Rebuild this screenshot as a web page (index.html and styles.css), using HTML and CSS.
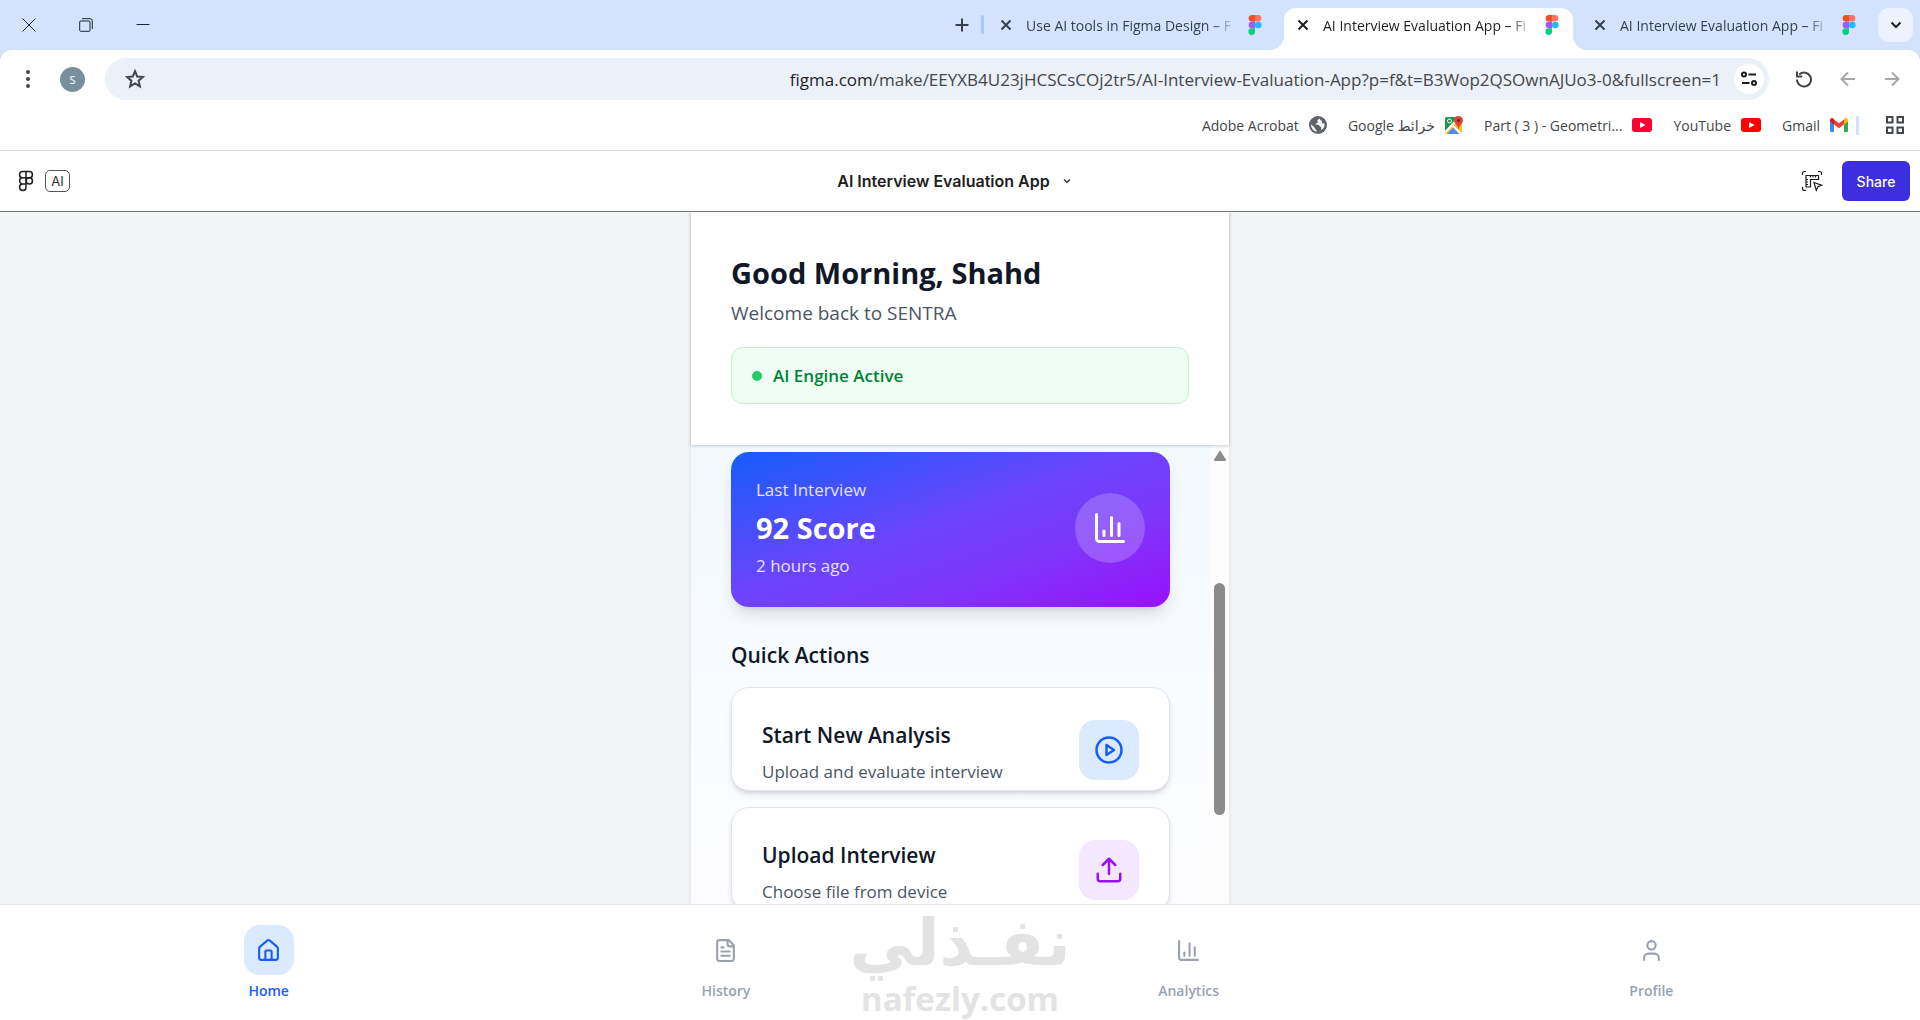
FILE: index.html
```html
<!DOCTYPE html>
<html lang="en">
<head>
    <meta charset="UTF-8">
    <meta name="viewport" content="width=device-width, initial-scale=1.0">
    <title>AI Interview Evaluation App</title>
    <link rel="stylesheet" href="styles.css">
</head>
<body>
    <!-- Shared icons -->
    <svg class="sprite" aria-hidden="true">
        <symbol id="figma" viewBox="0 0 14 20">
            <path fill="#f24e1e" d="M7 0H4a3.3 3.3 0 0 0 0 6.6h3z"/>
            <path fill="#ff7262" d="M7 0h3a3.3 3.3 0 0 1 0 6.6H7z"/>
            <path fill="#a259ff" d="M7 6.6H4a3.3 3.3 0 0 0 0 6.7h3z"/>
            <circle fill="#1abcfe" cx="10.3" cy="10" r="3.3"/>
            <path fill="#0acf83" d="M4 13.3h3v3.2a3.3 3.3 0 1 1-3-3.2z"/>
        </symbol>
        <symbol id="close" viewBox="0 0 12 12">
            <path d="M1.500 1.500l9 9M10.500 1.500l-9 9" fill="none" stroke="currentColor" stroke-width="2"/>
        </symbol>
        <symbol id="chart" viewBox="0 0 24 24">
            <path d="M3 3v16a2 2 0 0 0 2 2h16M18 17V9M13 17V5M8 17v-3"/>
        </symbol>
        <symbol id="youtube" viewBox="0 0 20 14">
            <rect width="20" height="14" rx="3" fill="currentColor"/>
            <path d="M8 4l5.500 3L8 10z" fill="#fff"/>
        </symbol>
    </svg>

    <div class="tab-strip">
        <div class="window-controls">
            <button aria-label="Close window"><svg width="14" height="14" viewBox="0 0 14 14"><path d="M.5.5l13 13M13.500.5l-13 13"/></svg></button>
            <button aria-label="Restore window"><svg width="14" height="14" viewBox="0 0 14 14"><rect x=".7" y="3" width="10.300" height="10.300" rx="1"/><path d="M3 .7h8a2.300 2.300 0 0 1 2.300 2.300v8"/></svg></button>
            <button aria-label="Minimize window"><svg width="14" height="14" viewBox="0 0 14 14"><path d="M.5 6.500h13"/></svg></button>
        </div>
        <button class="new-tab" aria-label="New tab"><svg width="14" height="14" viewBox="0 0 14 14"><path d="M7 .5v13M.5 7h13"/></svg></button>
        <div class="tab first">
            <svg class="x"><use href="#close"/></svg>
            <span class="tab-title">Use AI tools in Figma Design – F</span>
            <svg class="favicon"><use href="#figma"/></svg>
        </div>
        <div class="tab active">
            <svg class="x"><use href="#close"/></svg>
            <span class="tab-title">AI Interview Evaluation App – Fi</span>
            <svg class="favicon"><use href="#figma"/></svg>
        </div>
        <div class="tab">
            <svg class="x"><use href="#close"/></svg>
            <span class="tab-title">AI Interview Evaluation App – Fi</span>
            <svg class="favicon"><use href="#figma"/></svg>
        </div>
        <button class="tab-search" aria-label="Search tabs"><svg width="12" height="8" viewBox="0 0 12 8"><path d="M1.500 1.500L6 6l4.500-4.500"/></svg></button>
    </div>

    <div class="browser-bar">
        <div class="toolbar">
            <button class="menu" aria-label="Menu"><svg width="4" height="18" viewBox="0 0 4 18"><circle cx="2" cy="2" r="2"/><circle cx="2" cy="9" r="2"/><circle cx="2" cy="16" r="2"/></svg></button>
            <button class="avatar">S</button>
            <div class="omnibox">
                <svg class="star" width="20" height="20" viewBox="0 0 20 20"><path d="M10 2.200l2.200 5.300 5.700.5-4.300 3.700 1.300 5.600-4.900-3-4.900 3 1.300-5.600L2.100 8l5.700-.5z"/></svg>
                <div class="url"><b>figma.com</b>/make/EEYXB4U23jHCSCsCOj2tr5/AI-Interview-Evaluation-App?p=f&amp;t=B3Wop2QSOwnAJUo3-0&amp;fullscreen=1</div>
                <button class="site-info" aria-label="Site information"><svg width="16" height="16" viewBox="0 0 16 16"><circle cx="3" cy="3.500" r="2"/><path d="M7.500 3.500H15M1 12h7.500"/><circle cx="13" cy="12" r="2"/></svg></button>
            </div>
            <button class="nav-btn" aria-label="Reload"><svg width="18" height="18" viewBox="0 0 18 18"><path d="M4.200 4.500A7 7 0 1 1 2 9.500M2 1.500V6.500h5.200"/></svg></button>
            <button class="nav-btn off" aria-label="Back"><svg width="16" height="16" viewBox="0 0 16 16"><path d="M15 8H2M8 1.500L1.500 8 8 14.500"/></svg></button>
            <button class="nav-btn off" aria-label="Forward"><svg width="16" height="16" viewBox="0 0 16 16"><path d="M1 8h13M8 1.500L14.500 8 8 14.500"/></svg></button>
        </div>
        <div class="bookmarks">
            <a href="#">Adobe Acrobat <svg width="18" height="18" viewBox="0 0 18 18"><circle cx="9" cy="9" r="9" fill="#5f6368"/><path fill="#fff" d="M10.500 2.200c-.3 1.300-1.500 1-2 2-.4 1 .6 1.300.2 2.200-.6 1.100-2.400.6-2.300 2.100 1.500.5 3.600-.3 4.100 1.200.3 1.200 1.600.8 1.900 1.900.2.900-.6 1.400-.5 2.400a7 7 0 0 0 3.700-6.600c-1 .2-1.700.3-2.300-.4-.7-.7.1-1.600-.7-2.300-.5-.5-1.300-.3-2.100-2.500zM2.100 8.200a7 7 0 0 0 5.500 7.600c.3-1-.1-1.800-.9-2.300-.9-.6-.8-1.700-1.700-2.600z"/></svg></a>
            <a href="#"><span dir="rtl">خرائط Google</span> <svg width="18" height="18" viewBox="0 0 18 18"><rect y="1" width="17" height="17" rx="2" fill="#fbc02d"/><path fill="#1e9650" d="M0 3a2 2 0 0 1 2-2h11L0 15z"/><path fill="#4f8df5" d="M2 18l6-6.500 6.500 6.500z"/><path d="M0 16.500L11 5" stroke="#fff" stroke-width="2"/><path d="M8 10l8 8" stroke="#fff" stroke-width="2"/><circle cx="4.500" cy="5" r="2" fill="none" stroke="#fff"/><path fill="#db4437" d="M13.500 0A4.500 4.500 0 0 0 9 4.500c0 3 3.500 4 4.500 9 1-5 4.500-6 4.500-9A4.500 4.500 0 0 0 13.500 0z"/><circle cx="13.500" cy="4.500" r="1.500" fill="#8c1a11"/></svg></a>
            <a href="#">Part ( 3 ) - Geometri... <svg class="yt pink" width="20" height="14"><use href="#youtube"/></svg></a>
            <a href="#">YouTube <svg class="yt" width="20" height="14"><use href="#youtube"/></svg></a>
            <a href="#">Gmail <svg width="18" height="14" viewBox="0 0 18 14"><path fill="#4285f4" d="M0 3h4v11H1.200A1.200 1.200 0 0 1 0 12.800z"/><path fill="#34a853" d="M14 3h4v9.800a1.200 1.200 0 0 1-1.200 1.200H14z"/><path fill="#ea4335" d="M4 1.500l5 3.800 5-3.800v5L9 10.300 4 6.500z"/><path fill="#c5221f" d="M0 2a2 2 0 0 1 3.200-1.500L4 1.200v5.300L0 3.500z"/><path fill="#fbbc04" d="M18 2a2 2 0 0 0-3.200-1.500l-.8.7v5.300l4-3z"/></svg></a>
            <span class="divider"></span>
            <button class="apps" aria-label="All bookmarks"><svg width="18" height="18" viewBox="0 0 18 18"><path d="M1 1h5.500v5.500H1zM11.500 1H17v5.500h-5.500zM1 11.500h5.500V17H1zM11.500 11.500H17V17h-5.500z"/></svg></button>
        </div>
    </div>

    <header class="figma-bar">
        <div class="figma-left">
            <svg class="figma-mark" width="16" height="22" viewBox="0 0 16 22"><path d="M8 1.500H4.700a3.100 3.100 0 0 0 0 6.300H8zM8 1.500h3.300a3.100 3.100 0 0 1 0 6.300H8zM8 7.800H4.700a3.100 3.100 0 0 0 0 6.200H8zM4.700 14A3.200 3.200 0 1 0 8 17.200V14z"/><circle cx="11.300" cy="10.900" r="3.100"/></svg>
            <span class="ai-badge">AI</span>
        </div>
        <button class="file-name">AI Interview Evaluation App <svg width="8" height="6" viewBox="0 0 8 6"><path d="M1 1.500l3 3 3-3"/></svg></button>
        <div class="figma-right">
            <svg width="22" height="22" viewBox="0 0 22 22"><path d="M1.500 5V3.500a2 2 0 0 1 2-2H5M17 1.500h1.500a2 2 0 0 1 2 2V5M1.500 17v1.500a2 2 0 0 0 2 2H5M5 5.500h12.500v4h-8V17H5zM9.500 5.500v2M12 5.500v2M14.500 5.500v2M5 9.500h2M5 12h2M5 14.500h2M13 12.500l7.500 2.700-3.500 1.600-1.700 3.500z"/></svg>
            <button class="share">Share</button>
        </div>
    </header>

    <main>
        <div class="phone">
            <section class="greeting">
                <h1>Good Morning, Shahd</h1>
                <p>Welcome back to SENTRA</p>
                <div class="status"><span class="dot"></span>AI Engine Active</div>
            </section>
            <div class="scroll-area">
                <div class="feed">
                    <section class="score">
                        <div>
                            <p>Last Interview</p>
                            <h2>92 Score</h2>
                            <p>2 hours ago</p>
                        </div>
                        <div class="score-icon"><svg class="icon" width="36" height="36"><use href="#chart"/></svg></div>
                    </section>
                    <h3>Quick Actions</h3>
                    <a class="action" href="#">
                        <div>
                            <h4>Start New Analysis</h4>
                            <p>Upload and evaluate interview</p>
                        </div>
                        <span class="action-icon blue"><svg class="icon" width="30" height="30" viewBox="0 0 24 24"><circle cx="12" cy="12" r="10"/><path d="M10 8l6 4-6 4z"/></svg></span>
                    </a>
                    <a class="action" href="#">
                        <div>
                            <h4>Upload Interview</h4>
                            <p>Choose file from device</p>
                        </div>
                        <span class="action-icon purple"><svg class="icon" width="30" height="30" viewBox="0 0 24 24"><path d="M12 3v12M17 8l-5-5-5 5M21 15v4a2 2 0 0 1-2 2H5a2 2 0 0 1-2-2v-4"/></svg></span>
                    </a>
                </div>
                <div class="scrollbar">
                    <svg width="14" height="10" viewBox="0 0 14 10"><path d="M7 1l5 8H2z" stroke="#8b8b8b" stroke-width="2" stroke-linejoin="round"/></svg>
                    <span class="thumb"></span>
                </div>
            </div>
        </div>
    </main>

    <nav>
        <a class="current" href="#"><span><svg class="icon" width="25" height="25" viewBox="0 0 24 24"><path d="M15 21v-8a1 1 0 0 0-1-1h-4a1 1 0 0 0-1 1v8"/><path d="M3 10a2 2 0 0 1 .7-1.500l7-6a2 2 0 0 1 2.600 0l7 6A2 2 0 0 1 21 10v9a2 2 0 0 1-2 2H5a2 2 0 0 1-2-2z"/></svg></span>Home</a>
        <a href="#"><span><svg class="icon" width="25" height="25" viewBox="0 0 24 24"><path d="M15 2H6a2 2 0 0 0-2 2v16a2 2 0 0 0 2 2h12a2 2 0 0 0 2-2V7zM14 2v4a2 2 0 0 0 2 2h4M10 9H8M16 13H8M16 17H8"/></svg></span>History</a>
        <a href="#"><span><svg class="icon" width="25" height="25"><use href="#chart"/></svg></span>Analytics</a>
        <a href="#"><span><svg class="icon" width="25" height="25" viewBox="0 0 24 24"><path d="M19 21v-2a4 4 0 0 0-4-4H9a4 4 0 0 0-4 4v2"/><circle cx="12" cy="7" r="4"/></svg></span>Profile</a>
        <div class="watermark">
            <span lang="ar">نفـذلي</span>
            <span class="domain">nafezly.com</span>
        </div>
    </nav>
</body>
</html>
```
FILE: styles.css
```css
* {
    box-sizing: border-box;
}

body {
    margin: 0;
    height: 100vh;
    display: flex;
    flex-direction: column;
    overflow: hidden;
    background: #fff;
    font-family: "Open Sans", "DejaVu Sans", sans-serif;
    color: #101828;
}

button {
    padding: 0;
    border: none;
    background: none;
    font-family: inherit;
    display: flex;
    align-items: center;
    justify-content: center;
    flex-shrink: 0;
}

a {
    color: inherit;
    text-decoration: none;
}

h1, h2, h3, h4, p {
    margin: 0;
}

svg {
    flex-shrink: 0;
    fill: none;
}

.sprite {
    position: absolute;
    width: 0;
    height: 0;
}

.icon {
    stroke: currentColor;
    stroke-width: 2;
    stroke-linecap: round;
    stroke-linejoin: round;
}

/* Browser tabs */
.tab-strip {
    position: relative;
    z-index: 1;
    display: flex;
    height: 50px;
    padding-right: 7px;
    background: #d3e3fd;
    color: #36404d;
}

.window-controls {
    display: flex;
    flex: 1;
}

.window-controls button {
    width: 57px;
    height: 50px;
}

.window-controls svg {
    stroke: #1f2733;
}

.new-tab {
    width: 50px;
}

.new-tab svg {
    stroke: #36404d;
    stroke-width: 2;
}

.tab {
    display: flex;
    align-items: center;
    width: 297px;
    height: 42px;
    margin-top: 8px;
    padding: 0 13px 8px;
    border-radius: 12px 12px 0 0;
    position: relative;
}

.tab.first::before {
    content: "";
    position: absolute;
    left: -6px;
    top: 7px;
    width: 3px;
    height: 19px;
    border-radius: 2px;
    background: #a8c7fa;
}

.tab.active {
    background: #fff;
    width: 289px;
    margin-right: 8px;
    color: #1f1f1f;
}

.tab.active::before, .tab.active::after {
    content: "";
    position: absolute;
    bottom: 0;
    width: 14px;
    height: 14px;
}

.tab.active::before {
    left: -14px;
    background: radial-gradient(circle at 0 0, transparent 14px, #fff 14px);
}

.tab.active::after {
    right: -14px;
    background: radial-gradient(circle at 100% 0, transparent 14px, #fff 14px);
}

.x {
    width: 12px;
    height: 12px;
}

.tab-title {
    width: 210px;
    margin: 0 12px 0 14px;
    font-size: 14px;
    white-space: nowrap;
    overflow: hidden;
    -webkit-mask-image: linear-gradient(to left, transparent, #000 24px);
    mask-image: linear-gradient(to left, transparent, #000 24px);
}

.favicon {
    width: 14px;
    height: 20px;
}

.tab-search {
    width: 35px;
    height: 34px;
    margin: 8px 0 0;
    border-radius: 11px;
    background: #ecf3fe;
}

.tab-search svg {
    stroke: #1f1f1f;
    stroke-width: 2;
}

/* Address bar and bookmarks */
.browser-bar {
    height: 101px;
    border-bottom: 1px solid #dcdee1;
    background: #fff;
    box-shadow: 0 -10px 0 #d3e3fd;
    border-radius: 12px 12px 0 0;
    color: #44474a;
}

.toolbar {
    display: flex;
    align-items: center;
    height: 50px;
    padding: 8px 6px 0 0;
}

.menu {
    width: 55px;
}

.menu svg {
    fill: #44474a;
}

.avatar {
    width: 25px;
    height: 25px;
    margin: 0 20px 0 5px;
    border-radius: 50%;
    background: #78909c;
    color: #fff;
    font-size: 11px;
}

.omnibox {
    flex: 1;
    display: flex;
    align-items: center;
    height: 42px;
    margin-right: 13px;
    padding: 0 5px 0 20px;
    border-radius: 21px;
    background: #ebf0f9;
}

.star path {
    stroke: #44474a;
    stroke-width: 2;
}

.url {
    flex: 1;
    text-align: right;
    font-size: 17px;
    white-space: nowrap;
}

.url b {
    font-weight: 400;
    color: #1f1f1f;
}

.site-info {
    width: 30px;
    height: 30px;
    margin-left: 13px;
    border-radius: 50%;
    background: #fff;
}

.site-info svg {
    stroke: #1f1f1f;
    stroke-width: 2;
}

.nav-btn {
    width: 44px;
}

.nav-btn svg {
    stroke: #44474a;
    stroke-width: 2;
}

.nav-btn.off svg {
    stroke: #a5a7a9;
}

.bookmarks {
    display: flex;
    align-items: center;
    justify-content: flex-end;
    gap: 21px;
    height: 50px;
    padding-right: 16px;
    font-size: 14px;
}

.bookmarks a {
    display: flex;
    align-items: center;
    gap: 10px;
}

.yt {
    color: #f00;
}

.yt.pink {
    color: #ff0033;
}

.divider {
    width: 3px;
    height: 19px;
    margin: 0 6px 0 -13px;
    background: #d3e3fd;
}

.apps svg {
    stroke: #44474a;
    stroke-width: 2;
}

/* Figma header */
.figma-bar {
    display: grid;
    grid-template-columns: 1fr auto 1fr;
    align-items: center;
    height: 61px;
    padding: 0 10px 0 18px;
    border-bottom: 1px solid #6f7a74;
    font-family: Inter, sans-serif;
}

.figma-left, .figma-right {
    display: flex;
    align-items: center;
}

.figma-left {
    gap: 11px;
}

.figma-bar svg {
    stroke: #1e1e1e;
    stroke-width: 1.2;
}

.figma-bar .figma-mark {
    stroke-width: 1.5;
}

.ai-badge {
    width: 25px;
    height: 22px;
    border: 1px solid #555;
    border-radius: 5px;
    font-size: 13px;
    line-height: 20px;
    text-align: center;
    color: #333;
}

.file-name {
    gap: 13px;
    margin-right: 20px;
    font-size: 16px;
    font-weight: 600;
    color: #1e1e1e;
}

.figma-right {
    justify-content: flex-end;
    gap: 19px;
}

.share {
    width: 68px;
    height: 40px;
    border-radius: 6px;
    background: #3d2ee0;
    color: #fff;
    font-size: 14px;
    font-weight: 500;
}

/* App */
main {
    flex: 1;
    min-height: 0;
    display: flex;
    justify-content: center;
    background: #f3f4f6;
    overflow: hidden;
}

.phone {
    display: flex;
    flex-direction: column;
    width: 100%;
    max-width: 538px;
    background: linear-gradient(#eff6ff, #f3f9ff 40%, #f8fbff 70%, #fdfdff);
    box-shadow: 0 0 4px rgba(0, 0, 0, 0.12);
}

.greeting {
    padding: 39px 40px 41px;
    background: #fff;
    box-shadow: 0 1px 3px rgba(0, 0, 0, 0.2);
    z-index: 1;
}

.greeting h1 {
    font-size: 29px;
    line-height: 44px;
}

.greeting p {
    margin-bottom: 16px;
    font-size: 19px;
    line-height: 36px;
    color: #4a5565;
}

.status {
    display: flex;
    align-items: center;
    gap: 11px;
    height: 57px;
    padding: 0 20px;
    border: 1px solid #c0f0d2;
    border-radius: 12px;
    background: #f0fdf4;
    color: #008236;
    font-size: 17px;
    font-weight: 600;
}

.dot {
    width: 10px;
    height: 10px;
    border-radius: 50%;
    background: #25cb66;
}

.scroll-area {
    flex: 1;
    min-height: 0;
    display: flex;
}

.feed {
    flex: 1;
    padding: 7px 40px 0;
}

.score {
    display: flex;
    align-items: center;
    justify-content: space-between;
    height: 155px;
    padding: 0 25px 4px;
    border-radius: 18px;
    background: linear-gradient(to bottom right, #155dfc, #6a45fb 45%, #7f35fa 70%, #9810fa);
    box-shadow: 0 10px 15px -3px rgba(0, 0, 0, 0.12), 0 4px 6px -4px rgba(0, 0, 0, 0.12);
    color: #fff;
}

.score p {
    font-size: 17px;
    line-height: 30px;
    color: #e6e0ff;
}

.score h2 {
    margin: 2px 0;
    font-size: 29px;
    line-height: 42px;
}

.score-icon {
    display: flex;
    align-items: center;
    justify-content: center;
    width: 70px;
    height: 70px;
    border-radius: 50%;
    background: rgba(255, 255, 255, 0.2);
}

.feed h3 {
    margin: 32px 0 16px;
    font-size: 21px;
    line-height: 32px;
    font-weight: 600;
}

.action {
    display: flex;
    justify-content: space-between;
    height: 104px;
    margin-bottom: 16px;
    padding: 32px 30px 0;
    border: 1px solid #e2e6ec;
    border-radius: 18px;
    background: #fff;
    box-shadow: 0 4px 6px -1px rgba(0, 0, 0, 0.12), 0 2px 4px -2px rgba(0, 0, 0, 0.12);
}

.action h4 {
    margin-bottom: 4px;
    font-size: 21px;
    line-height: 30px;
    font-weight: 600;
}

.action p {
    font-size: 17px;
    line-height: 36px;
    color: #4a5565;
}

.action-icon {
    display: flex;
    align-items: center;
    justify-content: center;
    width: 60px;
    height: 60px;
    border-radius: 16px;
}

.blue {
    background: #dbeafe;
    color: #155dfc;
}

.purple {
    background: #f3e8ff;
    color: #9810fa;
}

.scrollbar {
    display: flex;
    flex-direction: column;
    align-items: center;
    width: 19px;
    padding-top: 6px;
    background: #fcfcfd;
}

.scrollbar svg {
    fill: #8b8b8b;
}

.thumb {
    width: 11px;
    height: 232px;
    margin-top: 122px;
    border-radius: 6px;
    background: #8b8b8b;
}

/* Bottom navigation */
nav {
    position: relative;
    display: flex;
    justify-content: space-around;
    padding: 20px 40px 19px;
    border-top: 1px solid #e5e7eb;
    background: #fff;
}

nav a {
    display: flex;
    flex-direction: column;
    align-items: center;
    gap: 6px;
    min-width: 50px;
    font-size: 14px;
    line-height: 20px;
    font-weight: 600;
    color: #99a1af;
}

nav a span {
    display: flex;
    align-items: center;
    justify-content: center;
    width: 50px;
    height: 50px;
    border-radius: 16px;
}

nav .current {
    color: #155dfc;
}

nav .current span {
    background: #dbeafe;
}

.watermark {
    position: absolute;
    left: 50%;
    top: 0;
    transform: translateX(-50%);
    display: flex;
    flex-direction: column;
    align-items: center;
    color: #e3e3e3;
    font-weight: 700;
    white-space: nowrap;
    pointer-events: none;
}

.watermark span {
    font-family: "DejaVu Sans", sans-serif;
    font-size: 65px;
    line-height: 76px;
}

.watermark .domain {
    font-family: "Open Sans", sans-serif;
    font-size: 33px;
    line-height: 36px;
}
```
